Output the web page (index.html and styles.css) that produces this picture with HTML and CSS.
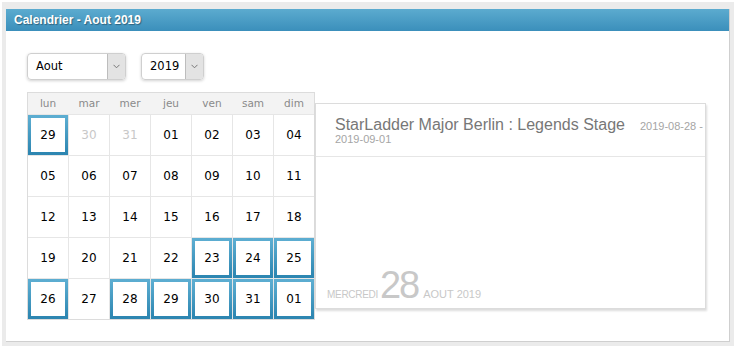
FILE: index.html
```html
<!DOCTYPE html>
<html lang="fr">

<head>
    <meta charset="UTF-8">
    <meta name="viewport" content="width=device-width, initial-scale=1.0">
    <title>Calendrier</title>
    <link rel="stylesheet" href="styles.css">
</head>

<body>
    <!-- FENETRE -->
    <div class="Window">
        <div class="Window-inner">
            <header class="Window-header">Calendrier - Aout 2019</header>

            <main class="Content">
                <!-- Colonne gauche -->
                <section class="Picker">
                    <div class="Picker-selects">
                        <div class="Select Select--month">
                            <span class="Select-value">Aout</span>
                            <span class="Select-arrow">
                                <svg width="7" height="5" viewBox="0 0 7 5"><path d="M0.5 0.8 L3.5 3.8 L6.5 0.8" fill="none" stroke="#777" stroke-width="1"/></svg>
                            </span>
                        </div>
                        <div class="Select Select--year">
                            <span class="Select-value">2019</span>
                            <span class="Select-arrow">
                                <svg width="7" height="5" viewBox="0 0 7 5"><path d="M0.5 0.8 L3.5 3.8 L6.5 0.8" fill="none" stroke="#777" stroke-width="1"/></svg>
                            </span>
                        </div>
                    </div>

                    <div class="Calendar">
                        <div class="Calendar-head">
                            <span>lun</span><span>mar</span><span>mer</span><span>jeu</span><span>ven</span><span>sam</span><span>dim</span>
                        </div>
                        <div class="Calendar-grid">
                            <div class="Day is-event">29</div>
                            <div class="Day is-other">30</div>
                            <div class="Day is-other">31</div>
                            <div class="Day">01</div>
                            <div class="Day">02</div>
                            <div class="Day">03</div>
                            <div class="Day">04</div>

                            <div class="Day">05</div>
                            <div class="Day">06</div>
                            <div class="Day">07</div>
                            <div class="Day">08</div>
                            <div class="Day">09</div>
                            <div class="Day">10</div>
                            <div class="Day">11</div>

                            <div class="Day">12</div>
                            <div class="Day">13</div>
                            <div class="Day">14</div>
                            <div class="Day">15</div>
                            <div class="Day">16</div>
                            <div class="Day">17</div>
                            <div class="Day">18</div>

                            <div class="Day">19</div>
                            <div class="Day">20</div>
                            <div class="Day">21</div>
                            <div class="Day">22</div>
                            <div class="Day is-event">23</div>
                            <div class="Day is-event">24</div>
                            <div class="Day is-event">25</div>

                            <div class="Day is-event">26</div>
                            <div class="Day">27</div>
                            <div class="Day is-event">28</div>
                            <div class="Day is-event">29</div>
                            <div class="Day is-event">30</div>
                            <div class="Day is-event">31</div>
                            <div class="Day is-event">01</div>
                        </div>
                    </div>
                </section>

                <!-- Panneau evenement -->
                <section class="Event">
                    <div class="Event-header">
                        <div class="Event-line">
                            <span class="Event-title">StarLadder Major Berlin : Legends Stage</span><span class="Event-dates">2019-08-28 -</span>
                        </div>
                        <div class="Event-dates">2019-09-01</div>
                    </div>
                    <div class="Event-body"></div>
                    <div class="Event-day">
                        <span class="Event-weekday">MERCREDI</span>
                        <span class="Event-num">28</span>
                        <span class="Event-month">AOUT 2019</span>
                    </div>
                </section>
            </main>
        </div>
    </div>
</body>

</html>
```

FILE: styles.css
```css
/* VARIABLES */
:root {
    --blue-light: #5cadd1;
    --blue-dark: #2d86b1;
    --grid-line: #e6e6e6;
}

/* RESET */
* {
    margin: 0;
    padding: 0;
    box-sizing: border-box;
}

body {
    background: #fff;
    font-family: "Liberation Sans", Arial, sans-serif;
}

/* FENETRE */
.Window {
    margin: 2px 6px 0 2px;
    height: 344px;
    border: 4px solid #ebebeb;
    border-top-width: 7px;
}

.Window-inner {
    height: 100%;
    border-right: 1px solid #cfcfcf;
    border-bottom: 1px solid #cfcfcf;
}

.Window-header {
    height: 22px;
    line-height: 22px;
    padding-left: 8px;
    background: linear-gradient(#5cabcf, #3b8fbb);
    color: #fff;
    font-size: 12px;
    font-weight: bold;
    text-shadow: 1px 1px 1px rgba(0, 0, 0, 0.35);
}

/* CONTENU */
.Content {
    display: flex;
    align-items: flex-start;
    padding: 22px 0 0 21px;
}

.Picker {
    display: flex;
    flex-direction: column;
    gap: 12px;
}

.Picker-selects {
    display: flex;
    gap: 15px;
}

.Select {
    display: flex;
    height: 27px;
    border: 1px solid #cfcfcf;
    border-radius: 4px;
    box-shadow: 0 1px 3px rgba(0, 0, 0, 0.18);
    overflow: hidden;
    font-family: "DejaVu Sans", Verdana, sans-serif;
    font-size: 11.5px;
    color: #000;
}

.Select--month {
    width: 99px;
}

.Select--year {
    width: 63px;
}

.Select-value {
    flex: 1;
    line-height: 25px;
    padding-left: 8px;
}

.Select-arrow {
    width: 18px;
    display: flex;
    align-items: center;
    justify-content: center;
    background: #e3e3e3;
    border-left: 1px solid #bdbdbd;
}

/* CALENDRIER */
.Calendar {
    width: 288px;
    border: 1px solid #dcdcdc;
    font-family: "DejaVu Sans", Verdana, sans-serif;
}

.Calendar-head {
    display: grid;
    grid-template-columns: repeat(7, 40px);
    column-gap: 1px;
    height: 22px;
    line-height: 21px;
    background: #f3f3f3;
    border-bottom: 1px solid var(--grid-line);
    font-size: 10.5px;
    color: #8a8a8a;
    text-align: center;
}

.Calendar-grid {
    display: grid;
    grid-template-columns: repeat(7, 40px);
    grid-auto-rows: 40px;
    gap: 1px;
    background: var(--grid-line);
}

.Day {
    display: flex;
    align-items: center;
    justify-content: center;
    background: #fff;
    font-size: 12px;
    color: #000;
}

.Day.is-other {
    color: #c8c8c8;
}

.Day.is-event {
    border: 3px solid;
    border-image: linear-gradient(var(--blue-light), var(--blue-dark)) 1;
}

/* EVENEMENT */
.Event {
    display: flex;
    flex-direction: column;
    width: 391px;
    height: 206px;
    margin-top: 50px;
    border: 1px solid #dcdcdc;
    box-shadow: 1px 2px 2px rgba(0, 0, 0, 0.14);
    background: #fff;
}

.Event-header {
    padding: 13px 2px 10px 19px;
    border-bottom: 1px solid #e6e6e6;
}

.Event-line {
    font-size: 16px;
    line-height: 16px;
    white-space: nowrap;
}

.Event-title {
    color: #777;
}

.Event-dates {
    font-size: 11px;
    line-height: 1;
    color: #a5a5a5;
}

.Event-line .Event-dates {
    margin-left: 15px;
}

.Event-header > .Event-dates {
    line-height: 13px;
}

.Event-body {
    flex: 1;
}

.Event-day {
    display: flex;
    align-items: baseline;
    padding: 0 0 4px 11px;
    color: #c8c8c8;
}

.Event-weekday {
    font-size: 10px;
    letter-spacing: -0.3px;
}

.Event-num {
    font-size: 38px;
    line-height: 1;
    letter-spacing: -2px;
    margin: 0 5px 0 2px;
}

.Event-month {
    font-size: 11px;
}
```
